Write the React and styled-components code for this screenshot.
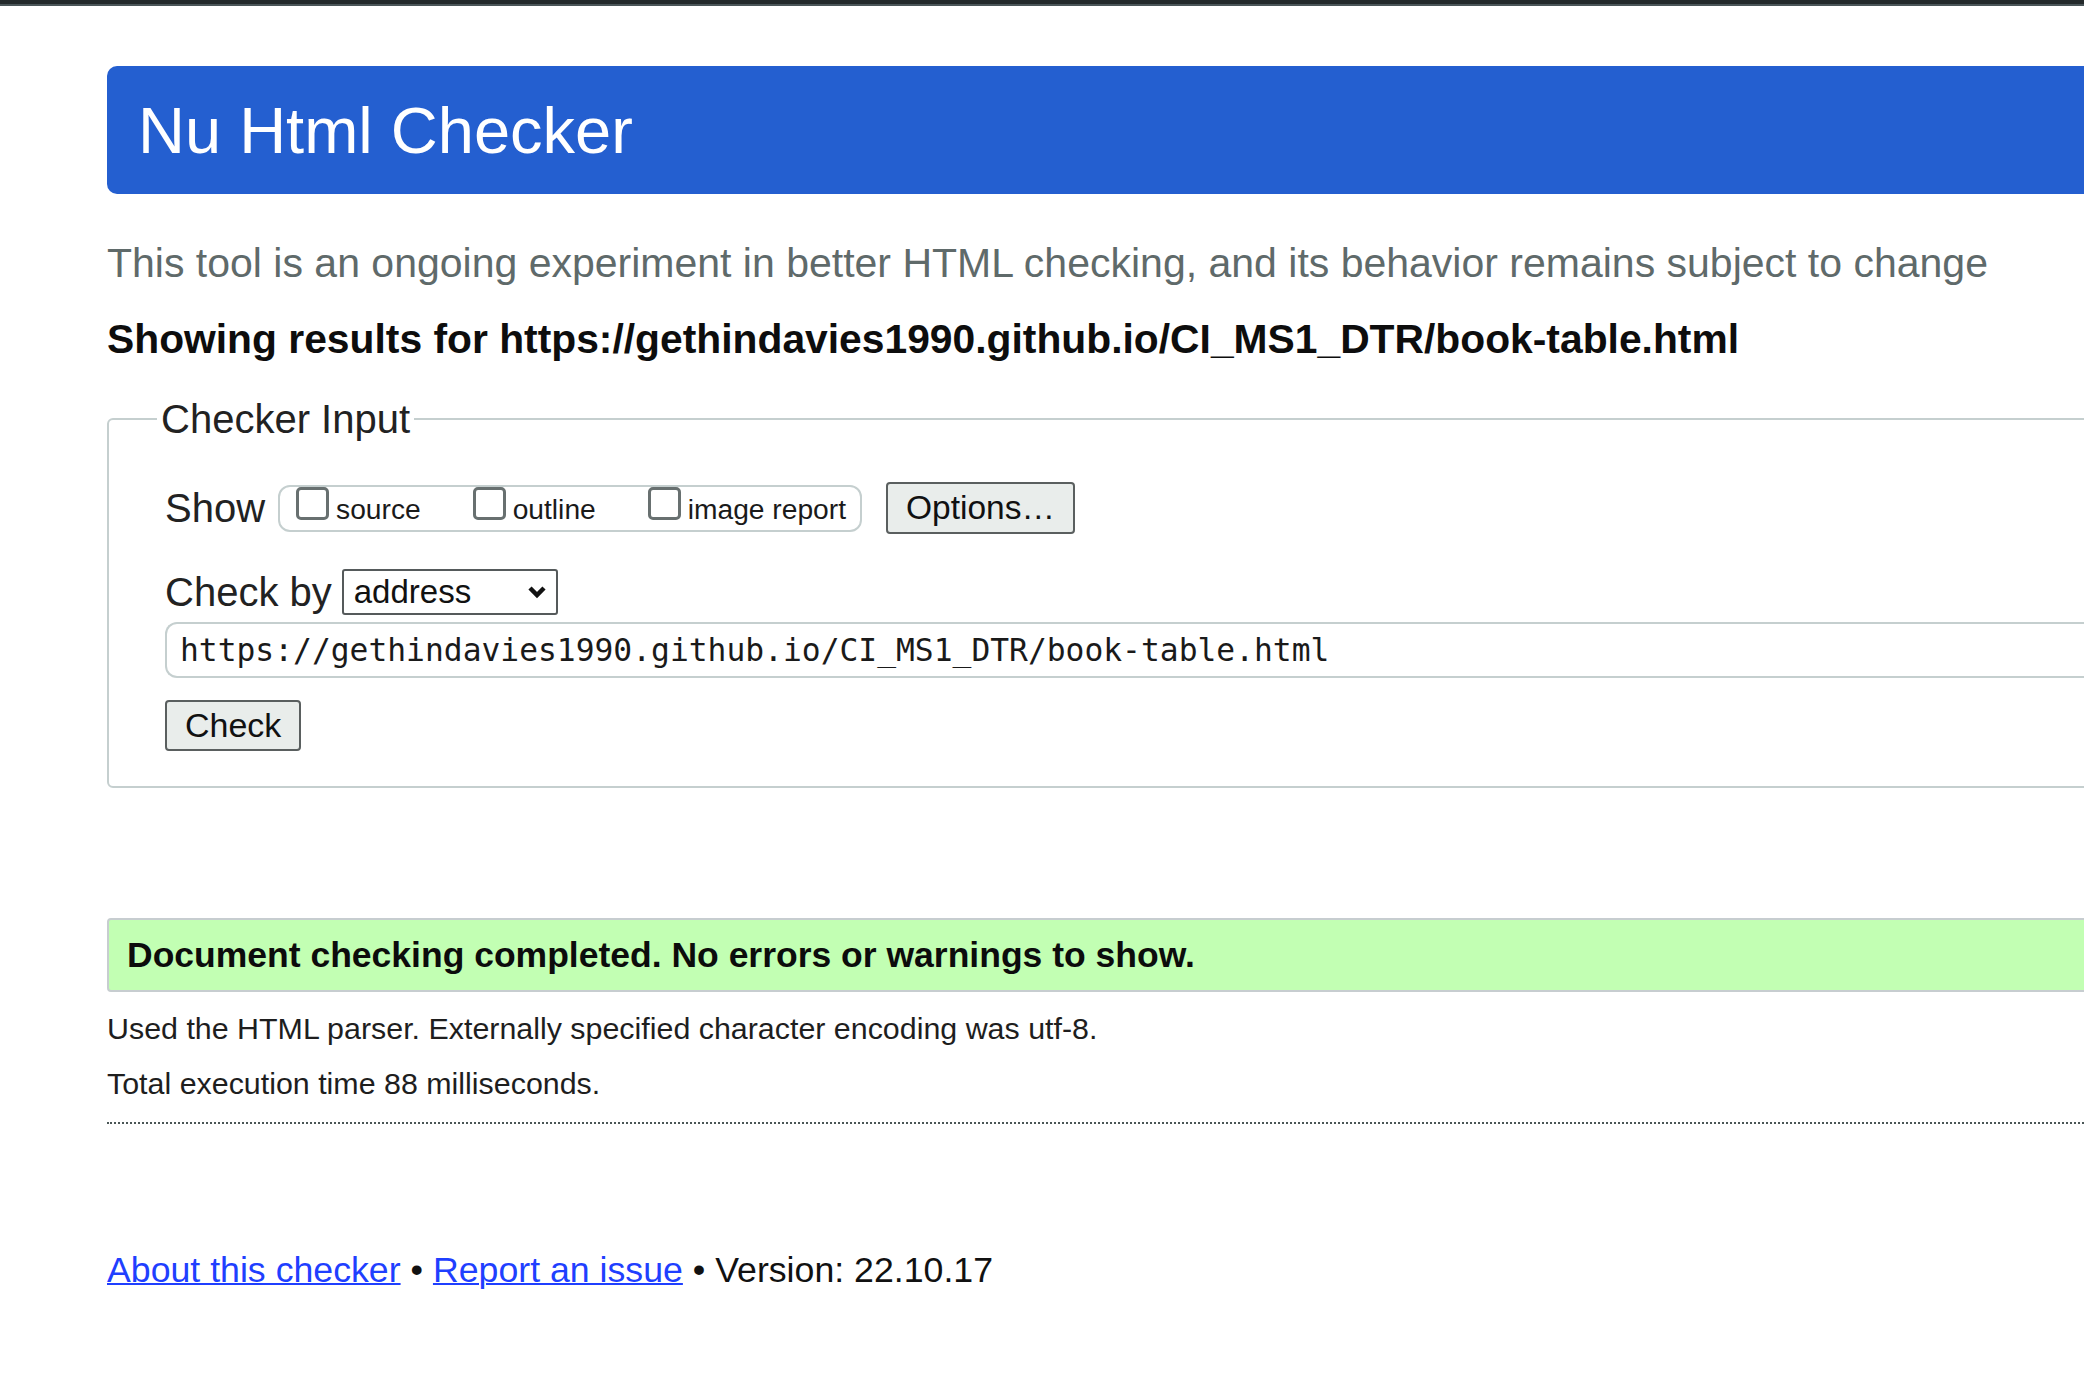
import React from "react";
import styled, { createGlobalStyle } from "styled-components";

const GlobalStyle = createGlobalStyle`
  body {
    margin: 0;
    background: #fff;
    overflow: hidden;
    font-family: "Liberation Sans", Arial, sans-serif;
    color: #1c1c1c;
  }
`;

const TopRule = styled.div`
  height: 4px;
  background: #23292b;
  border-bottom: 2px solid #4a5558;
`;

const Main = styled.main`
  margin: 60px -140px 0 107px;
`;

const Header = styled.h1`
  margin: 0;
  height: 128px;
  display: flex;
  align-items: center;
  padding-left: 31px;
  background: #245fd0;
  border-radius: 10px;
  color: #fff;
  font-size: 65px;
  font-weight: 400;
  line-height: 1;
`;

const Intro = styled.p`
  margin: 45px 0 0;
  font-size: 41px;
  line-height: 48px;
  color: #5f6a6a;
`;

const Showing = styled.p`
  margin: 28px 0 0;
  font-size: 40.8px;
  line-height: 48px;
  font-weight: 700;
  color: #0d0d0d;
`;

const Fieldset = styled.fieldset`
  margin: 33px 0 0;
  padding: 0 0 35px 56px;
  border: 2px solid #c5cfcf;
  border-radius: 6px;
  min-inline-size: 0;
`;

const Legend = styled.legend`
  padding: 0 4px;
  margin-left: -8px;
  font-size: 40px;
  line-height: 46px;
  color: #222;
`;

const Row = styled.div`
  display: flex;
  align-items: center;
  margin-top: ${(p) => p.$gap}px;
`;

const Label = styled.span`
  font-size: 40px;
  line-height: 46px;
  color: #222;
`;

const Pill = styled.div`
  display: flex;
  align-items: flex-start;
  height: 47px;
  box-sizing: border-box;
  margin-left: 13px;
  padding: 0 14px 0 16px;
  border: 2px solid #c5cfcf;
  border-radius: 12px;
  gap: 52px;
`;

const Option = styled.label`
  display: flex;
  align-items: flex-start;
  gap: 7px;
  font-size: 28.2px;
  line-height: 44px;
  color: #1a1a1a;
`;

const Box = styled.input`
  appearance: none;
  margin: 0;
  width: 33px;
  height: 33px;
  box-sizing: border-box;
  border: 3px solid #687070;
  border-radius: 5px;
  background: #fff;
`;

const Button = styled.button`
  box-sizing: border-box;
  height: ${(p) => p.$h}px;
  padding: 0 ${(p) => p.$pad}px;
  margin-left: ${(p) => p.$ml || 0}px;
  background: #e9edeb;
  border: 2px solid #5a5f5f;
  border-radius: 4px;
  font-family: "Liberation Sans", Arial, sans-serif;
  font-size: ${(p) => p.$fs}px;
  color: #111;
`;

const Select = styled.div`
  display: flex;
  align-items: center;
  justify-content: space-between;
  box-sizing: border-box;
  width: 216px;
  height: 46px;
  margin-left: 10px;
  padding: 0 9px 0 10px;
  border: 2px solid #555a5b;
  border-radius: 3px;
  font-size: 33px;
  color: #111;
`;

const UrlInput = styled.input`
  display: block;
  box-sizing: border-box;
  width: 100%;
  height: 56px;
  margin-top: 7px;
  padding: 0 13px;
  border: 2px solid #c5cfcf;
  border-right: none;
  border-radius: 12px 0 0 12px;
  font-family: "DejaVu Sans Mono", "Liberation Mono", monospace;
  font-size: 31.3px;
  color: #1a1a1a;
  background: #fff;
  outline: none;
`;

const Success = styled.div`
  display: flex;
  align-items: center;
  height: 74px;
  box-sizing: border-box;
  margin-top: 130px;
  padding-left: 18px;
  background: #c2ffb3;
  border: 2px solid #c7cdd0;
  border-radius: 4px;
  font-size: 35.5px;
  font-weight: 700;
  color: #0c0c0c;
`;

const Detail = styled.p`
  margin: ${(p) => p.$mt}px 0 0;
  font-size: 30.4px;
  line-height: 40px;
  color: #1e1e1e;
`;

const Rule = styled.hr`
  margin: 19px 0 0;
  border: none;
  border-top: 2px dotted #4a5656;
`;

const Footer = styled.p`
  margin: 124px 0 0;
  font-size: 35.7px;
  line-height: 44px;
  color: #111;

  a {
    color: #1f3fff;
    text-decoration: underline;
    text-decoration-thickness: 2px;
  }
`;

function Chevron() {
  return (
    <svg width="20" height="14" viewBox="0 0 20 14">
      <path d="M3 3 L10 10 L17 3" fill="none" stroke="#111" strokeWidth="4.5" />
    </svg>
  );
}

const url = "https://gethindavies1990.github.io/CI_MS1_DTR/book-table.html";

export default function App() {
  return (
    <>
      <GlobalStyle />
      <TopRule />
      <Main>
        <Header>Nu Html Checker</Header>
        <Intro>
          This tool is an ongoing experiment in better HTML checking, and its
          behavior remains subject to change
        </Intro>
        <Showing>Showing results for {url}</Showing>

        <Fieldset>
          <Legend>Checker Input</Legend>
          <Row $gap={40}>
            <Label>Show</Label>
            <Pill>
              <Option>
                <Box type="checkbox" />
                source
              </Option>
              <Option>
                <Box type="checkbox" />
                outline
              </Option>
              <Option>
                <Box type="checkbox" />
                image report
              </Option>
            </Pill>
            <Button $h={52} $pad={18} $ml={24} $fs={33.5}>
              Options…
            </Button>
          </Row>
          <Row $gap={35}>
            <Label>Check by</Label>
            <Select>
              <span>address</span>
              <Chevron />
            </Select>
          </Row>
          <UrlInput readOnly value={url} />
          <Row $gap={22}>
            <Button $h={51} $pad={18} $fs={34}>
              Check
            </Button>
          </Row>
        </Fieldset>

        <Success>
          Document checking completed. No errors or warnings to show.
        </Success>
        <Detail $mt={16}>
          Used the HTML parser. Externally specified character encoding was
          utf-8.
        </Detail>
        <Detail $mt={15}>Total execution time 88 milliseconds.</Detail>
        <Rule />
        <Footer>
          <a href="#about">About this checker</a> •{" "}
          <a href="#issue">Report an issue</a> • Version: 22.10.17
        </Footer>
      </Main>
    </>
  );
}
